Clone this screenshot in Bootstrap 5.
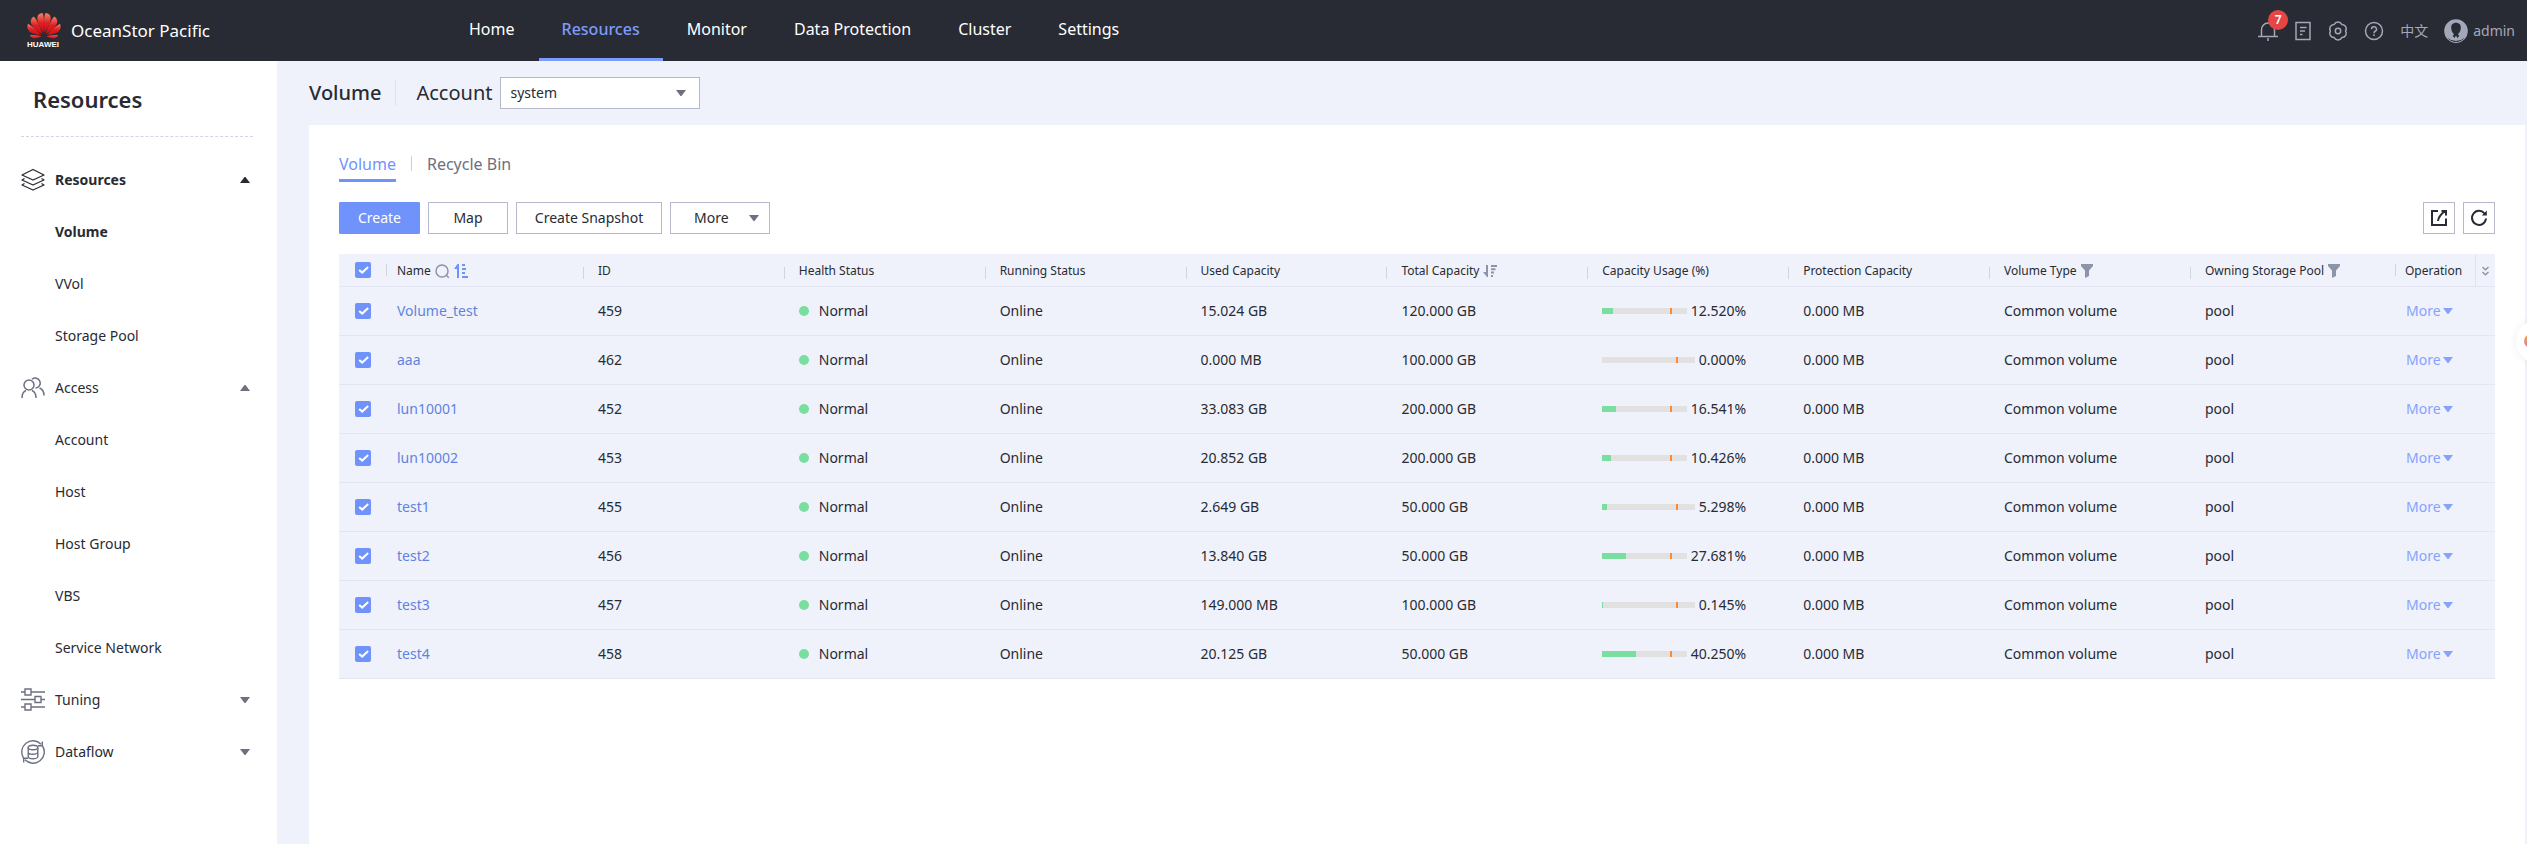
<!DOCTYPE html>
<html lang="en">
<head>
<meta charset="utf-8">
<meta name="viewport" content="width=device-width, initial-scale=1">
<title>OceanStor Pacific - Volume</title>
<link href="https://cdn.jsdelivr.net/npm/bootstrap@5.3.0/dist/css/bootstrap.min.css" rel="stylesheet">
<style>
body{font-family:"Noto Sans","Noto Sans CJK SC",sans-serif;font-size:14px;line-height:20px;color:#282b33;background:#eff2fb;min-height:100vh}
svg{display:block;flex:none}
.topbar{background:#282b33;height:61px}
.brandname{font-size:17px;line-height:24px;color:#fff}
.brandbox{width:446px;padding-left:27px;gap:10px;flex:none}
.topnav{gap:1px}
.topnav .nav-link{color:#fff;font-size:16px;line-height:24px;padding:17px 23px 17px;border-bottom:3px solid transparent}
.topnav .nav-link.active{color:#7c9cfb;font-weight:500;border-color:#7c9cfb}
.tools{color:#a3a8b8;padding-right:12px}
.tools a{color:inherit}
.user{gap:5px}
.alarm{left:10px;top:-11px;width:20px;height:20px;background:#e54545;border-radius:50%;color:#fff;font-size:12px;line-height:20px;font-weight:600;text-align:center}
.sidebar{width:277px;flex:none}
.sidebar h1{font-size:22px;line-height:30px;font-weight:600;padding:23px 33px 22px;margin:0}
.rule{border-top:1px dashed #d2d5e5;margin:0 24px 0 21px}
.menu{padding-top:17px}
.menu a{height:52px;color:#282b33}
.menu .group{padding:0 27px 0 21px;gap:10px;color:#6c7080}
.menu .group.current{color:#282b33}
.menu .group span{color:#282b33}
.menu .item{padding-left:55px}
.pagehead{height:64px;padding-left:32px;font-size:20px;line-height:28px}
.pagehead h2{font-size:20px;line-height:28px;font-weight:500}
.headrule{width:1px;height:26px;background:#dfe2ee;margin:0 20px 0 14px}
.account-label{margin-right:7px}
.account{width:200px;height:32px;border:1px solid #b5b9ca;background:#fff;padding:0 10px;font-size:14px;color:#282b33;appearance:none;border-radius:0}
.account-arrow{right:14px;top:13px;pointer-events:none}
.panel{background:#fff;margin:0 2px 0 32px;padding:27px 30px}
.tabs{gap:15px}
.tabs a{font-size:16px;line-height:24px;padding-bottom:3px;border-bottom:3px solid transparent;color:#6c7080}
.tabs a.active{color:#6f93fb;border-color:#6f93fb}
.tabrule{width:1px;height:15px;background:#c9cddc;margin-top:4px}
.act{height:32px;border:1px solid #b5b9ca;border-radius:0;background:#fff;font-size:14px;line-height:20px;padding:0;color:#282b33}
.act.main{background:#6f93fb;border-color:#6f93fb;color:#fff;border-radius:1px}
.w-create{width:81px}.w-map{width:80px}.w-snap{width:146px}.w-more{width:100px;padding:0 10px 0 23px}.w-ico{width:32px}
.grid{table-layout:fixed;width:100%;background:#eff2fb;border-collapse:separate;border-spacing:0}
.grid th,.grid td{padding:0 0 0 15px;border-bottom:1px solid #e3e6f2;white-space:nowrap;vertical-align:middle}
.grid th{height:33px;font-size:12px;line-height:18px;font-weight:400;padding-top:2px;background:linear-gradient(#cfd3e2,#cfd3e2) no-repeat 0 13px/1px 12px}
.grid td{height:49px}
.grid th:first-child,.grid td:first-child{padding-left:16px}
.grid th.plain{background:none;padding-top:0}
.grid th.high{background-position:4px 10px}
.grid th.op{background-position:0 10px;padding-left:10px}
.grid td.op{padding-left:11px}
.grid th.cfg{padding-left:6px;background:none;border-left:1px solid #e0e3f0}
.grid td a{color:#5f83e0;text-decoration:none}
.grid td.op a{color:#86a3fc;gap:2px}
.grid input{appearance:none;display:block;width:16px;height:16px;margin:0;border-radius:2px;background:#fff;border:1px solid #b5b9ca}
.grid input:checked{border:0;background:#6f93fb url("data:image/svg+xml,%3Csvg xmlns='http://www.w3.org/2000/svg' viewBox='0 0 16 16'%3E%3Cpath d='M4.200 7.900l3 2.700 6-5.600' fill='none' stroke='%23fff' stroke-width='2'/%3E%3C/svg%3E")}
.c-sel{width:43px}.c-pool{width:205px}.c-op{width:80px}.c-cfg{width:20px}
.status{gap:10px}
.dot{width:10px;height:10px;border-radius:50%;background:#79dea0}
.usage{width:144px}
.meter-track{height:6px;background:#e1e1e1}
.meter-fill{height:6px;background:#79dea0}
.limit{left:80%;top:0;width:2px;height:6px;background:#ff8833}
.assist{right:-32px;top:320px;width:43px;height:43px;border-radius:50%;background:#fff;box-shadow:0 0 10px #00000012;overflow:visible}
.assist-orb{left:8px;top:14px;width:14px;height:14px;border-radius:50%;background:linear-gradient(#f0a840,#d878b0)}
</style>
</head>
<body class="d-flex flex-column overflow-x-hidden">
<svg width="0" height="0" class="position-absolute" aria-hidden="true"><defs>
<symbol id="down" viewBox="0 0 10 6"><path d="M0 0h10L5.500 6h-1z" fill="currentColor"/></symbol>
<symbol id="up" viewBox="0 0 10 6"><path d="M0 6h10L5.500 0h-1z" fill="currentColor"/></symbol>
<symbol id="funnel" viewBox="0 0 12 14"><path d="M0 0h12v2L8 6.500V12l-4 2V6.500L0 2z" fill="currentColor"/></symbol>
</defs></svg>
<header class="topbar d-flex">
  <div class="brandbox d-flex align-items-center">
    <svg width="34" height="40" viewBox="0 0 34 40" role="img" aria-label="Huawei">
      <defs><linearGradient id="petal" x1="0" y1="0" x2="0" y2="1"><stop offset="0" stop-color="#f58468"/><stop offset=".5" stop-color="#e01f22"/><stop offset="1" stop-color="#c80f16"/></linearGradient></defs>
      <g fill="url(#petal)">
        <path d="M16.500 22C17 15 17.500 5 15.500 2c-4 .3-5.800 3-5 7 .8 4 3.200 9 6 13z"/><path d="M17.500 22C17 15 16.500 5 18.500 2c4 .3 5.800 3 5 7-.8 4-3.200 9-6 13z"/>
        <path d="M15.500 23C13 15 10 9 6.800 5.500 3 8 3 12 5.500 15c2.500 3 6.500 6 10 8z"/><path d="M18.500 23c2.500-8 5.500-14 8.700-17.500 3.800 2.500 3.800 6.500 1.300 9.500-2.500 3-6.500 6-10 8z"/>
        <path d="M14.500 24C10 19 5 15 1 12.800c-1.600 4 .1 7.400 3.300 9 2.800 1.400 7.200 2 10.200 2.200z"/><path d="M19.500 24c4.500-5 9.500-9 13.500-11.200 1.600 4-.1 7.400-3.300 9-2.800 1.400-7.200 2-10.200 2.200z"/>
        <path d="M14.500 25.200c-4-.8-7.500-1.200-11.500-1 1.300 3 4 3.700 6.300 3 2-.6 4-1.300 5.200-2z"/><path d="M19.500 25.200c4-.8 7.500-1.200 11.500-1-1.300 3-4 3.700-6.300 3-2-.6-4-1.300-5.200-2z"/>
      </g>
      <text x="0" y="36" font-family="Liberation Sans,sans-serif" font-weight="700" font-size="8" fill="#fff">HUAWEI</text>
    </svg>
    <span class="brandname">OceanStor Pacific</span>
  </div>
  <nav class="topnav nav flex-nowrap flex-grow-1" aria-label="Main">
    <a class="nav-link" href="#">Home</a><a class="nav-link active" href="#" aria-current="page">Resources</a><a class="nav-link" href="#">Monitor</a><a class="nav-link" href="#">Data Protection</a><a class="nav-link" href="#">Cluster</a><a class="nav-link" href="#">Settings</a>
  </nav>
  <div class="tools d-flex align-items-center">
    <a href="#" class="position-relative me-3" aria-label="Alarms"><svg width="20" height="20" viewBox="0 0 20 20" fill="none" stroke="currentColor" stroke-width="1.500"><path d="M0 15.500h20M3.500 15.500V9a6.500 7 0 0 1 13 0v6.500M10 17v3"/></svg><span class="alarm position-absolute">7</span></a>
    <a href="#" class="me-3" aria-label="Tasks"><svg width="18" height="20" viewBox="0 0 18 20" fill="none" stroke="currentColor" stroke-width="1.500"><path d="M2 1.500h14v17H2zM6 6.500h6.500M6 10h5M6 13.500h2.500"/></svg></a>
    <a href="#" class="me-3" aria-label="System settings"><svg width="20" height="20" viewBox="0 0 20 20" fill="none" stroke="currentColor" stroke-width="1.500" stroke-linejoin="round"><path d="M17.600 10a4.300 4.300 0 0 1-3.800 6.600a4.300 4.300 0 0 1-7.600 0a4.300 4.300 0 0 1-3.800-6.600a4.300 4.300 0 0 1 3.800-6.600a4.300 4.300 0 0 1 7.600 0a4.300 4.300 0 0 1 3.800 6.600z"/><circle cx="10" cy="10" r="2.700"/></svg></a>
    <a href="#" class="me-3" aria-label="Help"><svg width="20" height="20" viewBox="0 0 20 20" fill="none" stroke="currentColor" stroke-width="1.500"><circle cx="10" cy="10" r="8.500"/><path d="M7.500 8.200a2.500 2.400 0 1 1 3.600 2.100q-1.100.5-1.100 1.900M10 13.300v1.700"/></svg></a>
    <a href="#" class="text-decoration-none me-3">中文</a>
    <a href="#" class="user d-flex align-items-center text-decoration-none"><svg width="24" height="24" viewBox="0 0 24 24"><circle cx="12" cy="12" r="11.800" fill="#a3a8b8"/><path d="M12 3.800c3.500 0 5 2.300 4.800 5.400-.1 2.600-1.500 4.800-2.900 6l1.300 1.500-1.500 2.300-1.700-2.300-1.700 2.300-1.500-2.300 1.300-1.500c-1.400-1.200-2.800-3.400-2.900-6C7 6.100 8.500 3.800 12 3.800z" fill="#282b33"/><path d="M2.500 18.500a11.400 11.400 0 0 0 19 0q-9.500 7-19 0z" fill="#282b33"/><path d="M3 19a11.300 11.300 0 0 0 18 0" fill="none" stroke="#a3a8b8"/></svg><span>admin</span></a>
  </div>
</header>
<div class="d-flex flex-grow-1">
  <aside class="sidebar bg-white">
    <h1>Resources</h1>
    <div class="rule"></div>
    <nav class="menu nav flex-column flex-nowrap" aria-label="Resources">
      <a class="group current d-flex align-items-center text-decoration-none fw-bold" href="#"><svg width="24" height="24" viewBox="0 0 24 24" fill="none" stroke="currentColor" stroke-width="1.300" stroke-linejoin="round"><path d="M12 1.500L23 7l-11 5L1 7zM3.500 10.500L1 12l11 5 11-5-2.500-1.500M3.500 15.500L1 17l11 5 11-5-2.500-1.500"/></svg><span class="me-auto">Resources</span><svg width="10" height="6"><use href="#up"/></svg></a>
      <a class="item d-flex align-items-center text-decoration-none fw-bold" href="#">Volume</a>
      <a class="item d-flex align-items-center text-decoration-none" href="#">VVol</a>
      <a class="item d-flex align-items-center text-decoration-none" href="#">Storage Pool</a>
      <a class="group d-flex align-items-center text-decoration-none" href="#"><svg width="24" height="24" viewBox="0 0 24 24" fill="none" stroke="currentColor" stroke-width="1.500"><circle cx="8" cy="9" r="5"/><path d="M11 3.200a5 5 0 1 1 3.500 8.800M1 22q0-6 4-7.500M11 14.500q4 1.500 4 7.500M18.500 12q4.500 1.800 4.500 7.500"/></svg><span class="me-auto">Access</span><svg width="10" height="6"><use href="#up"/></svg></a>
      <a class="item d-flex align-items-center text-decoration-none" href="#">Account</a>
      <a class="item d-flex align-items-center text-decoration-none" href="#">Host</a>
      <a class="item d-flex align-items-center text-decoration-none" href="#">Host Group</a>
      <a class="item d-flex align-items-center text-decoration-none" href="#">VBS</a>
      <a class="item d-flex align-items-center text-decoration-none" href="#">Service Network</a>
      <a class="group d-flex align-items-center text-decoration-none" href="#"><svg width="24" height="24" viewBox="0 0 24 24" fill="none" stroke="currentColor" stroke-width="1.400"><path d="M0 4h4M10 4h14M0 11.500h14M20 11.500h4M0 19h4M10 19h14M4 1h6v6H4zM14 8.500h6v6h-6zM4 16h6v6H4z"/></svg><span class="me-auto">Tuning</span><svg width="10" height="6"><use href="#down"/></svg></a>
      <a class="group d-flex align-items-center text-decoration-none" href="#"><svg width="24" height="24" viewBox="0 0 24 24" fill="none" stroke="currentColor" stroke-width="1.400"><path d="M2.500 18A11.200 11.200 0 0 1 20 4.200M21.500 6A11.200 11.200 0 0 1 4 19.800M21.300 1.500v4.300h-4.300M2.700 22.500v-4.300h4.300"/><ellipse cx="12" cy="7.500" rx="4.800" ry="2.200"/><path d="M7.200 7.500v9c0 3 9.600 3 9.600 0v-9M7.200 12c0 3 9.600 3 9.600 0"/></svg><span class="me-auto">Dataflow</span><svg width="10" height="6"><use href="#down"/></svg></a>
    </nav>
  </aside>
  <main class="flex-grow-1 d-flex flex-column">
    <div class="pagehead d-flex align-items-center">
      <h2 class="m-0">Volume</h2><div class="headrule"></div>
      <label for="account" class="account-label">Account</label>
      <div class="position-relative d-flex"><select id="account" class="account"><option>system</option></select><svg class="account-arrow position-absolute" width="10" height="6" color="#6c7080"><use href="#down"/></svg></div>
    </div>
    <section class="panel flex-grow-1">
      <nav class="tabs d-flex" aria-label="Views"><a class="active text-decoration-none" href="#">Volume</a><div class="tabrule"></div><a class="text-decoration-none" href="#">Recycle Bin</a></nav>
      <div class="d-flex gap-2 mt-3 pt-1 mb-3 pb-1">
        <button class="btn act main w-create">Create</button><button class="btn act w-map">Map</button><button class="btn act w-snap">Create Snapshot</button>
        <button class="btn act w-more d-flex align-items-center justify-content-between">More<svg width="10" height="6" color="#6c7080"><use href="#down"/></svg></button>
        <button class="btn act w-ico ms-auto d-flex align-items-center justify-content-center" aria-label="Export"><svg width="18" height="18" viewBox="0 0 18 18" fill="none" stroke="currentColor" stroke-width="2"><path d="M8 2H2v14h14V9.500M8 12q.5-5 7-10M11.500 2H16v4.500"/></svg></button>
        <button class="btn act w-ico d-flex align-items-center justify-content-center" aria-label="Refresh"><svg width="18" height="18" viewBox="0 0 18 18" fill="none" stroke="currentColor" stroke-width="2"><path d="M14.500 4.500A7 7 0 1 0 16 9.500"/><path d="M16.800 1.500v5h-5z" fill="currentColor" stroke="none"/></svg></button>
      </div>
      <table class="grid">
        <colgroup><col class="c-sel"><col><col><col><col><col><col><col><col><col><col class="c-pool"><col class="c-op"><col class="c-cfg"></colgroup>
        <thead><tr>
          <th class="plain"><input type="checkbox" checked aria-label="Select all"></th>
          <th class="high"><div class="d-flex align-items-center gap-1">Name<svg width="15" height="15" viewBox="0 0 15 15" fill="none" stroke="#8d93a8" stroke-width="1.500"><circle cx="7" cy="7" r="6"/><path d="M11.300 11.300l2.500 2.500"/></svg><svg width="14" height="14" viewBox="0 0 14 14" fill="#6f93fb"><path d="M3.500 0H5v14H3V5H0zM8 0h3v2H8zM8 4h4v2H8zM8 8h3v2H8zM8 12h6v2H8z"/></svg></div></th>
          <th>ID</th><th>Health Status</th><th>Running Status</th><th>Used Capacity</th>
          <th><div class="d-flex align-items-center gap-1">Total Capacity<svg width="14" height="12" viewBox="0 0 14 12" fill="#8d93a8"><path d="M3 0h2v12H4L0 7h3zM8 0h6v2H8zM8 3.300h4.500v2H8zM8 6.600h3v2H8zM8 10h2v2H8z"/></svg></div></th>
          <th>Capacity Usage (%)</th><th>Protection Capacity</th>
          <th><div class="d-flex align-items-center gap-1">Volume Type<svg width="12" height="14" color="#8d93a8"><use href="#funnel"/></svg></div></th>
          <th><div class="d-flex align-items-center gap-1">Owning Storage Pool<svg width="12" height="14" color="#8d93a8"><use href="#funnel"/></svg></div></th>
          <th class="op">Operation</th>
          <th class="cfg"><svg width="7" height="10" viewBox="0 0 7 10" fill="none" stroke="#8d93a8" stroke-width="1.400"><path d="M.5 1l3 2.800L6.500 1M.5 6l3 2.800L6.500 6"/></svg></th>
        </tr></thead>
        <tbody id="rows"></tbody>
      </table>
    </section>
  </main>
</div>
<div class="position-absolute top-0 end-0 bottom-0 start-0 overflow-hidden pe-none"><div class="assist position-absolute"><div class="assist-orb position-absolute"></div></div></div>
<script src="https://cdn.jsdelivr.net/npm/bootstrap@5.3.0/dist/js/bootstrap.bundle.min.js"></script>
<script>
const volumes=[["Volume_test",459,"15.024 GB","120.000 GB","12.520"],["aaa",462,"0.000 MB","100.000 GB","0.000"],["lun10001",452,"33.083 GB","200.000 GB","16.541"],["lun10002",453,"20.852 GB","200.000 GB","10.426"],["test1",455,"2.649 GB","50.000 GB","5.298"],["test2",456,"13.840 GB","50.000 GB","27.681"],["test3",457,"149.000 MB","100.000 GB","0.145"],["test4",458,"20.125 GB","50.000 GB","40.250"]];
document.getElementById("rows").innerHTML=volumes.map(([name,id,used,total,pct])=>`<tr>
<td><input type="checkbox" checked aria-label="Select ${name}"></td><td><a href="#">${name}</a></td><td>${id}</td>
<td><div class="status d-flex align-items-center"><span class="dot"></span><span>Normal</span></div></td><td>Online</td><td>${used}</td><td>${total}</td>
<td><div class="usage d-flex align-items-center"><div class="meter-track position-relative flex-grow-1 me-1"><div class="meter-fill" style="width:${pct}%"></div><div class="limit position-absolute"></div></div><span>${pct}%</span></div></td>
<td>0.000 MB</td><td>Common volume</td><td>pool</td>
<td class="op"><a href="#" class="d-flex align-items-center">More<svg width="10" height="6"><use href="#down"/></svg></a></td><td></td></tr>`).join("");
</script>
</body>
</html>
